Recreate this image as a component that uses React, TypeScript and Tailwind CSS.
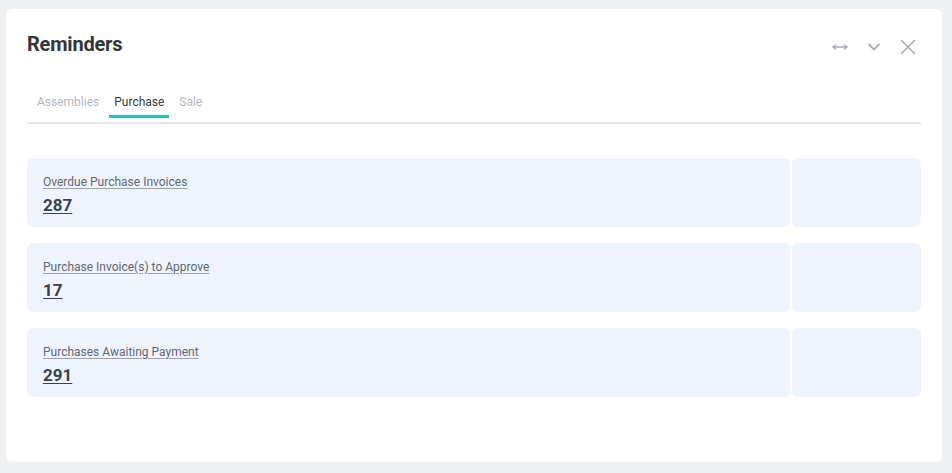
import React from 'react';

const items = [
  { label: 'Overdue Purchase Invoices', value: '287' },
  { label: 'Purchase Invoice(s) to Approve', value: '17' },
  { label: 'Purchases Awaiting Payment', value: '291' },
];

const tabs = ['Assemblies', 'Purchase', 'Sale'];

export default function App() {
  return (
    <div className="h-[473px] w-[952px] bg-[#eff0f2] pl-[6px] pr-[10px] pt-[9px] pb-[11px] font-['Roboto',sans-serif]">
      <div className="flex h-full flex-col rounded-md bg-white px-[21px] pt-[20px]">
        {/* Header */}
        <div className="flex items-start justify-between">
          <h2 className="text-[20px] font-bold tracking-[-0.2px] text-[#333639]">Reminders</h2>
          <div className="mr-[5px] mt-[10px] flex items-center text-[#a9adb3]">
            <svg width="18" height="12" viewBox="0 0 18 12" fill="none" stroke="currentColor" strokeWidth="1.6" strokeLinecap="round" strokeLinejoin="round">
              <path d="M2 6h14M4.5 4 2 6l2.5 2M13.5 4 16 6l-2.5 2" />
            </svg>
            <svg className="ml-[18px]" width="14" height="12" viewBox="0 0 14 12" fill="none" stroke="currentColor" strokeWidth="1.8" strokeLinecap="round" strokeLinejoin="round">
              <path d="M2 3.5l5 5 5-5" />
            </svg>
            <svg className="ml-[19px]" width="16" height="16" viewBox="0 0 16 16" fill="none" stroke="currentColor" strokeWidth="1.5" strokeLinecap="round">
              <path d="M1.5 1.5l13 13M14.5 1.5l-13 13" />
            </svg>
          </div>
        </div>

        {/* Tabs */}
        <div className="mt-[36px] flex gap-[10px] border-b-2 border-[#e3e5e8] pb-[4px] pl-[10px]">
          {tabs.map(t => (
            <div
              key={t}
              className={
                t === 'Purchase'
                  ? 'border-b-[3px] border-[#24bfb2] px-[5px] pb-[5px] text-[12px] leading-[15px] text-[#3a3d40]'
                  : 'border-b-[3px] border-transparent pb-[5px] text-[12px] leading-[15px] text-[#b3b7bc]'
              }
            >
              {t}
            </div>
          ))}
        </div>

        {/* Reminder cards */}
        <div className="mt-[34px] flex flex-col gap-4">
          {items.map(item => (
            <div key={item.label} className="flex h-[69px] gap-[2px]">
              <div className="flex flex-1 flex-col justify-center rounded-md bg-[#eff4fc] px-4 pt-[2px]">
                <a className="text-[12px] text-[#5e6773] underline decoration-[#9aa1aa] underline-offset-2">{item.label}</a>
                <a className="mt-[4px] text-[17px] font-bold leading-5 text-[#37424d] underline underline-offset-2">{item.value}</a>
              </div>
              <div className="w-[129px] rounded-md bg-[#eff4fc]" />
            </div>
          ))}
        </div>
      </div>
    </div>
  );
}
